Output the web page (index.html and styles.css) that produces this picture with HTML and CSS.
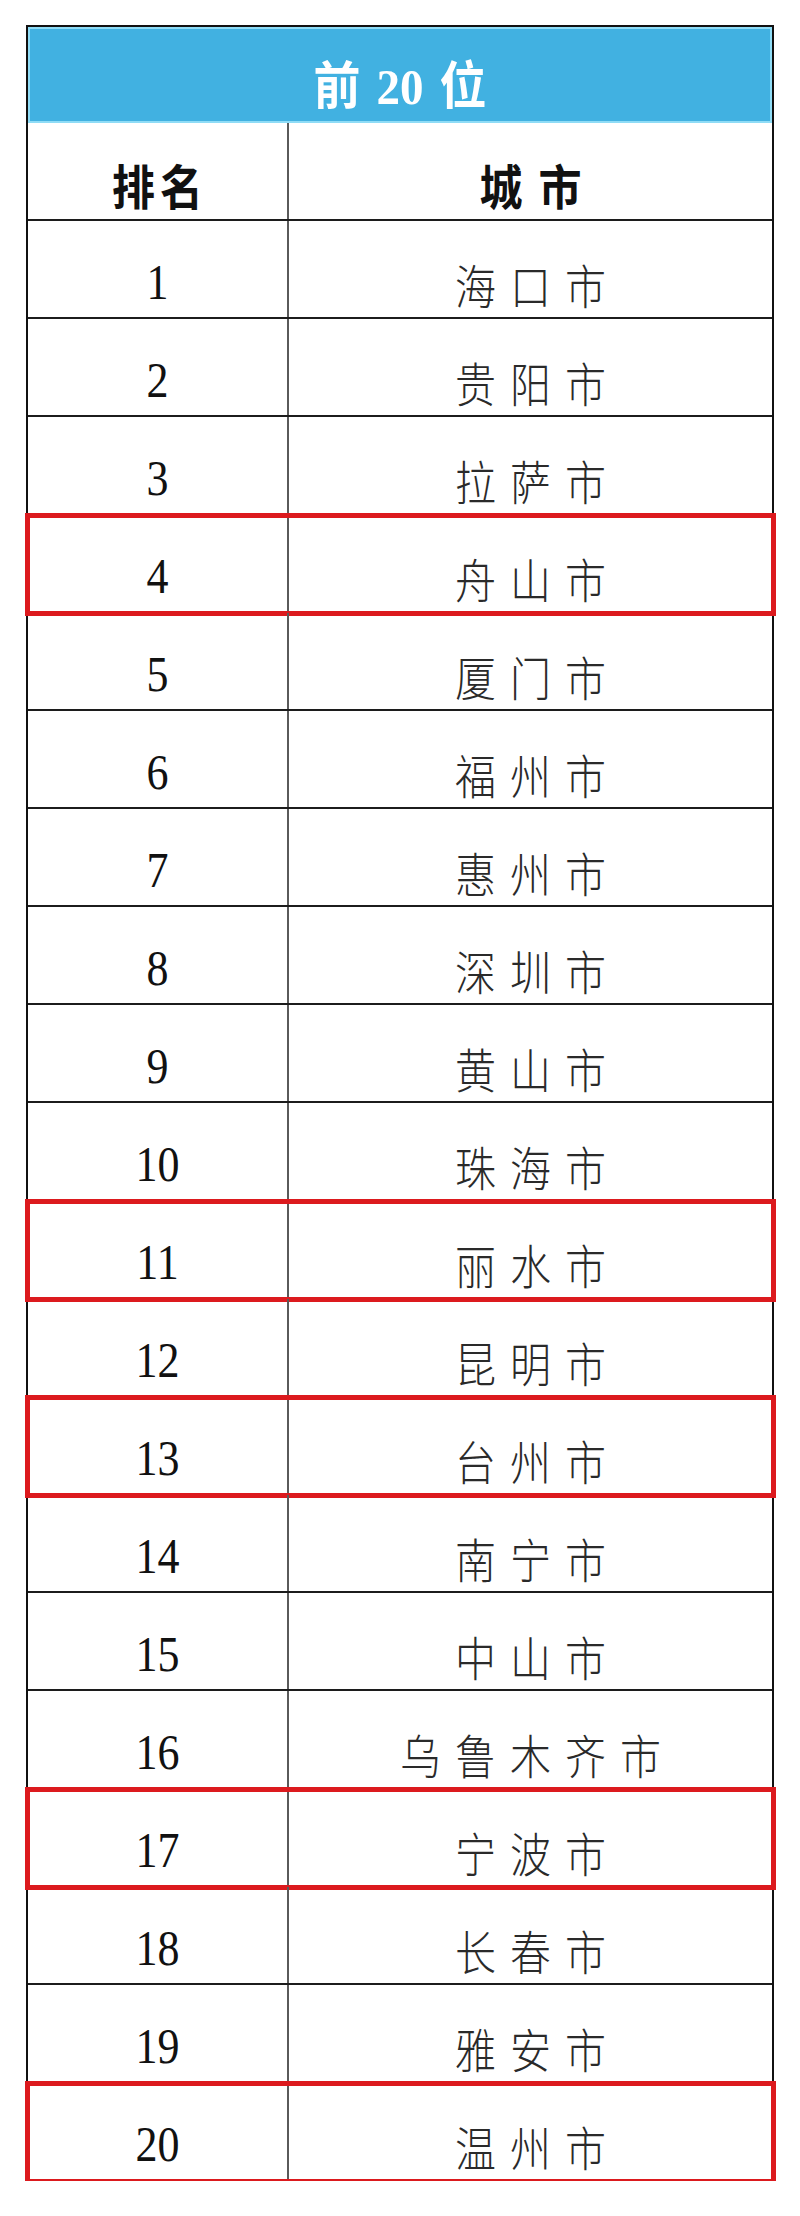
FILE: index.html
```html
<!DOCTYPE html>
<html lang="zh-CN">
<head>
<meta charset="utf-8">
<title>前20位</title>
<link rel="stylesheet" href="styles.css">
</head>
<body>
<div class="board">
  <div class="title"><span class="t">前<span class="num">20</span>位</span></div>
  <div class="row head">
    <div class="cell rank"><span class="hz h1">排名</span></div>
    <div class="cell city"><span class="hz h2">城市</span></div>
  </div>
  <div class="row"><div class="cell rank"><span class="n">1</span></div><div class="cell city"><span class="cn">海口市</span></div></div>
  <div class="row"><div class="cell rank"><span class="n">2</span></div><div class="cell city"><span class="cn">贵阳市</span></div></div>
  <div class="row"><div class="cell rank"><span class="n">3</span></div><div class="cell city"><span class="cn">拉萨市</span></div></div>
  <div class="row mark"><div class="cell rank"><span class="n">4</span></div><div class="cell city"><span class="cn">舟山市</span></div></div>
  <div class="row"><div class="cell rank"><span class="n">5</span></div><div class="cell city"><span class="cn">厦门市</span></div></div>
  <div class="row"><div class="cell rank"><span class="n">6</span></div><div class="cell city"><span class="cn">福州市</span></div></div>
  <div class="row"><div class="cell rank"><span class="n">7</span></div><div class="cell city"><span class="cn">惠州市</span></div></div>
  <div class="row"><div class="cell rank"><span class="n">8</span></div><div class="cell city"><span class="cn">深圳市</span></div></div>
  <div class="row"><div class="cell rank"><span class="n">9</span></div><div class="cell city"><span class="cn">黄山市</span></div></div>
  <div class="row"><div class="cell rank"><span class="n">10</span></div><div class="cell city"><span class="cn">珠海市</span></div></div>
  <div class="row mark"><div class="cell rank"><span class="n">11</span></div><div class="cell city"><span class="cn">丽水市</span></div></div>
  <div class="row"><div class="cell rank"><span class="n">12</span></div><div class="cell city"><span class="cn">昆明市</span></div></div>
  <div class="row mark"><div class="cell rank"><span class="n">13</span></div><div class="cell city"><span class="cn">台州市</span></div></div>
  <div class="row"><div class="cell rank"><span class="n">14</span></div><div class="cell city"><span class="cn">南宁市</span></div></div>
  <div class="row"><div class="cell rank"><span class="n">15</span></div><div class="cell city"><span class="cn">中山市</span></div></div>
  <div class="row"><div class="cell rank"><span class="n">16</span></div><div class="cell city"><span class="cn">乌鲁木齐市</span></div></div>
  <div class="row mark"><div class="cell rank"><span class="n">17</span></div><div class="cell city"><span class="cn">宁波市</span></div></div>
  <div class="row"><div class="cell rank"><span class="n">18</span></div><div class="cell city"><span class="cn">长春市</span></div></div>
  <div class="row"><div class="cell rank"><span class="n">19</span></div><div class="cell city"><span class="cn">雅安市</span></div></div>
  <div class="row mark last"><div class="cell rank"><span class="n">20</span></div><div class="cell city"><span class="cn">温州市</span></div></div>
</div>
</body>
</html>
```

FILE: styles.css
```css
html, body {
  margin: 0;
  padding: 0;
  background: #ffffff;
}

body {
  font-family: "Liberation Serif", "Noto Sans CJK SC", serif;
  color: #1a1a1a;
}

.board {
  box-sizing: border-box;
  width: 748px;
  margin: 25px 0 0 26px;
  border-top: 2px solid #111;
  border-left: 2px solid #111;
  border-right: 2px solid #111;
}

.title {
  box-sizing: border-box;
  height: 96px;
  background: #41b1e1;
  border: 2px solid #8fdcf6;
  display: flex;
  align-items: center;
  justify-content: center;
  padding-top: 22px;
}

.t {
  display: inline-block;
  color: #ffffff;
  font-family: "Liberation Serif", "Noto Sans CJK SC", serif;
  font-weight: bold;
  font-size: 47px;
  line-height: 1;
  transform: scaleY(1.1);
}

.t .num {
  margin: 0 16px;
}

.row {
  box-sizing: border-box;
  height: 98px;
  display: grid;
  grid-template-columns: 261px 1fr;
  border-bottom: 2px solid #1c1c1c;
  position: relative;
}

.cell {
  display: flex;
  align-items: center;
  justify-content: center;
  padding-top: 28px;
}

.rank {
  border-right: 2px solid #5a5a5a;
}

.n {
  display: inline-block;
  font-family: "Liberation Serif", serif;
  font-size: 44px;
  line-height: 1;
  color: #111;
  transform: scaleY(1.15);
}

.cn {
  display: inline-block;
  font-family: "Noto Sans CJK SC", sans-serif;
  font-weight: 300;
  font-size: 41px;
  line-height: 1;
  letter-spacing: 14px;
  padding-left: 14px;
  color: #2a2a2a;
  transform: scaleY(1.15);
}

.hz {
  display: inline-block;
  font-family: "Noto Sans CJK SC", sans-serif;
  font-weight: bold;
  font-size: 43px;
  line-height: 1;
  color: #111;
  transform: scaleY(1.12);
}

.h1 {
  letter-spacing: 5px;
  padding-left: 5px;
}

.h2 {
  letter-spacing: 16px;
  padding-left: 16px;
}

.head .cell {
  padding-top: 26px;
}

.mark::after {
  content: "";
  position: absolute;
  top: -2px;
  bottom: -5px;
  left: -3px;
  right: -4px;
  border: 5px solid #dc1a1e;
  pointer-events: none;
}
```
